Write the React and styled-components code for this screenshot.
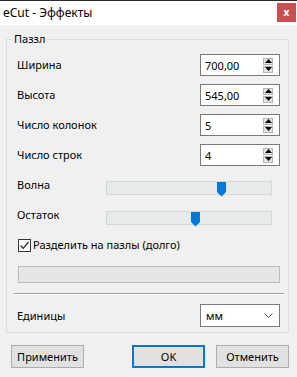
import React from "react";
import styled, { createGlobalStyle } from "styled-components";

const Global = createGlobalStyle`
  html, body { margin: 0; padding: 0; background: #f0f0f0; }
  body { font-family: "Noto Sans", "Open Sans", sans-serif; font-size: 11px; color: #000; }
  * { box-sizing: border-box; }
`;

const Window = styled.div`
  width: 297px;
  height: 377px;
  background: #f0f0f0;
  border-top: 1px solid #2b2b2b;
  display: flex;
  flex-direction: column;
  overflow: hidden;
`;

const TitleBar = styled.div`
  height: 24px;
  background: #fff;
  display: flex;
  align-items: flex-start;
  justify-content: space-between;
`;

const Title = styled.div`
  padding-left: 3px;
  line-height: 23px;
  font-size: 12px;
`;

const Close = styled.div`
  width: 19px;
  height: 19px;
  margin: 2px 1px 0 0;
  background: #c75050;
  color: #fff;
  display: flex;
  align-items: center;
  justify-content: center;
  font-family: "DejaVu Sans", sans-serif;
  font-weight: bold;
  font-size: 10px;
`;

const Group = styled.div`
  position: relative;
  margin: 14px 8px 0 6px;
  border: 1px solid #dcdcdc;
  padding: 14px 8px 5px 10px;
  display: flex;
  flex-direction: column;
`;

const Legend = styled.div`
  position: absolute;
  top: -9px;
  left: 5px;
  padding: 0 2px;
  background: #f0f0f0;
  line-height: 16px;
`;

const Row = styled.div`
  display: flex;
  align-items: center;
  justify-content: space-between;
  height: ${(p) => p.$h || 22}px;
  margin-top: ${(p) => p.$mt || 0}px;
`;

const Label = styled.span`
  white-space: nowrap;
  line-height: 16px;
`;

const SliderLabel = styled(Label)`
  align-self: flex-start;
  margin-top: -4px;
`;

const Field = styled.div`
  width: 80px;
  height: 22px;
  background: #fff;
  border: 1px solid #7a7a7a;
  display: flex;
  align-items: center;
  justify-content: space-between;
  padding: 0 6px 0 4px;
`;

const Spin = styled.div`
  display: flex;
  flex-direction: column;
  gap: 1px;
`;

const SpinBtn = styled.div`
  width: 10px;
  height: 7px;
  background: #e3e3e3;
  border: 1px solid #b4b4b4;
  display: flex;
  align-items: center;
  justify-content: center;
`;

const Track = styled.div`
  position: relative;
  width: 166px;
  height: 14px;
  margin-right: 8px;
  background: #e7eaea;
  border: 1px solid #d6d6d6;
`;

const Thumb = styled.svg`
  position: absolute;
  top: 0;
`;

const CheckRow = styled.label`
  display: flex;
  align-items: center;
  gap: 2px;
  height: 16px;
  margin-top: ${(p) => p.$mt}px;
  padding-left: 1px;
`;

const Box = styled.span`
  width: 13px;
  height: 13px;
  border: 1px solid #333;
  background: #fff;
  display: flex;
  align-items: center;
  justify-content: center;
`;

const Progress = styled.div`
  margin: 13px 0 0 1px;
  height: 17px;
  background: #e6e6e6;
  border: 1px solid #bcbcbc;
`;

const Separator = styled.div`
  margin: 10px -4px 0 -3px;
  height: 2px;
  border-top: 1px solid #a0a0a0;
  border-bottom: 1px solid #fff;
`;

const Select = styled(Field)`
  height: 23px;
  padding: 0 6px 0 5px;
`;

const Footer = styled.div`
  display: flex;
  align-items: center;
  margin-top: 12px;
  padding: 0 8px 0 11px;
`;

const Button = styled.div`
  width: 73px;
  height: 23px;
  background: #e1e1e1;
  border: ${(p) => (p.$primary ? "2px solid #0078d7" : "1px solid #adadad")};
  display: flex;
  align-items: center;
  justify-content: center;
  margin-left: ${(p) => p.$ml || 0}px;
`;

const Up = () => (
  <svg width="7" height="4" viewBox="0 0 7 4"><path d="M3.5 0 L7 4 L0 4 Z" fill="#000" /></svg>
);
const Down = () => (
  <svg width="7" height="4" viewBox="0 0 7 4"><path d="M0 0 L7 0 L3.5 4 Z" fill="#000" /></svg>
);

const Num = ({ value }) => (
  <Field>
    <span>{value}</span>
    <Spin>
      <SpinBtn><Up /></SpinBtn>
      <SpinBtn><Down /></SpinBtn>
    </Spin>
  </Field>
);

const Slider = ({ pos }) => (
  <Track>
    <Thumb width="9" height="15" viewBox="0 0 9 15" style={{ left: pos }}>
      <path d="M0 0 H9 V10 L4.5 14.5 L0 10 Z" fill="#0078d7" />
    </Thumb>
  </Track>
);

export default function App() {
  return (
    <>
      <Global />
      <Window>
        <TitleBar>
          <Title>eCut - Эффекты</Title>
          <Close>x</Close>
        </TitleBar>
        <Group>
          <Legend>Паззл</Legend>
          <Row><Label>Ширина</Label><Num value="700,00" /></Row>
          <Row $mt={8}><Label>Высота</Label><Num value="545,00" /></Row>
          <Row $mt={8}><Label>Число колонок</Label><Num value="5" /></Row>
          <Row $mt={8}><Label>Число строк</Label><Num value="4" /></Row>
          <Row $h={14} $mt={15}><SliderLabel>Волна</SliderLabel><Slider pos={110} /></Row>
          <Row $h={14} $mt={16}><SliderLabel>Остаток</SliderLabel><Slider pos={84} /></Row>
          <CheckRow $mt={12}>
            <Box>
              <svg width="11" height="11" viewBox="0 0 11 11">
                <path d="M1.5 5.5 L4.2 8.3 L9.5 2" stroke="#222" strokeWidth="1.2" fill="none" />
              </svg>
            </Box>
            <Label>Разделить на пазлы (долго)</Label>
          </CheckRow>
          <Progress />
          <Separator />
          <Row $h={23} $mt={9}>
            <Label>Единицы</Label>
            <Select>
              <span>мм</span>
              <svg width="9" height="5" viewBox="0 0 9 5">
                <path d="M0.5 0.5 L4.5 4.5 L8.5 0.5" stroke="#555" strokeWidth="1" fill="none" />
              </svg>
            </Select>
          </Row>
        </Group>
        <Footer>
          <Button>Применить</Button>
          <Button $primary $ml={48}>OK</Button>
          <Button $ml={11}>Отменить</Button>
        </Footer>
      </Window>
    </>
  );
}
